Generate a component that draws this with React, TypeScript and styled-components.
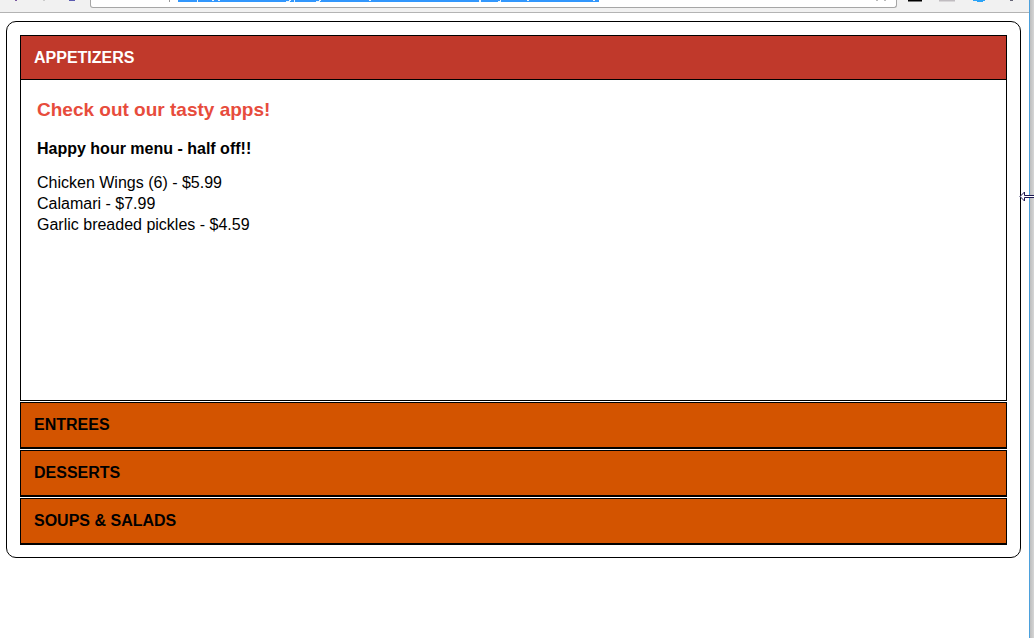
import React, { useState } from "react";
import styled, { createGlobalStyle } from "styled-components";

const GlobalStyle = createGlobalStyle`
  * { box-sizing: border-box; }
  html, body, #root { height: 100%; }
  body {
    margin: 0;
    background: #fff;
    color: #000;
    font: 16px/21px "Liberation Sans", Arial, sans-serif;
  }
`;

const Window = styled.div`
  display: grid;
  grid-template-columns: minmax(0, 1fr) 5px;
  min-height: 100vh;
`;

const Edge = styled.div`
  position: relative;
  border-left: 1px solid #4ba0dc;
  background: linear-gradient(to right, #bdbdbd, #d6d6d6);
`;

const ResizeCursor = styled.svg`
  position: absolute;
  top: 191px;
  right: 0;
  width: 15px;
  height: 11px;
`;

const Toolbar = styled.div`
  display: flex;
  height: 13px;
  overflow: hidden;
  background: #f1f1f1;
  border-bottom: 1px solid #b3b3b3;
`;

const NavIcons = styled.svg`
  flex: none;
  width: 90px;
  height: 12px;
`;

const AddressBar = styled.div`
  flex: 1;
  height: 8px;
  overflow: hidden;
  background: #fff;
  border: 1px solid #a6a6a6;
  border-top: 0;
  border-radius: 0 0 3px 3px;
  display: flex;
  justify-content: space-between;
`;

const Strip = styled.svg<{ $width: number }>`
  flex: none;
  width: ${(p) => p.$width}px;
  height: 7px;
`;

const Extensions = styled.svg`
  flex: none;
  width: 132px;
  height: 12px;
`;

const Menu = styled.main`
  margin: 8px 8px 0 6px;
  padding: 13px 13px 12px;
  border: 1px solid #000;
  border-radius: 10px;
`;

const Section = styled.section`
  & + & { margin-top: 1px; }
`;

const Heading = styled.h2`
  margin: 0;
  font-size: 16px;
  line-height: 21px;
`;

const HeadingButton = styled.button<{ $open: boolean }>`
  display: block;
  width: 100%;
  padding: ${(p) => (p.$open ? "11px 13px" : "11px 13px 12px")};
  border: 1px solid #000;
  border-bottom-width: ${(p) => (p.$open ? 1 : 2)}px;
  background: ${(p) => (p.$open ? "#c0392b" : "#d35400")};
  color: ${(p) => (p.$open ? "#fff" : "#000")};
  font: inherit;
  text-align: left;
  text-transform: uppercase;
  cursor: pointer;
`;

const Panel = styled.div`
  min-height: 321px;
  padding: 16px;
  border: 1px solid #000;
  border-top: 0;
`;

const Lead = styled.h3`
  margin: 0;
  color: #e74c3c;
  font-size: 19px;
  line-height: 28px;
`;

const Offer = styled.h4`
  margin: 14px 0 13px;
  font-size: 16px;
  line-height: 21px;
`;

const Dishes = styled.ul`
  margin: 0;
  padding: 0;
  list-style: none;
`;

interface MenuSection {
  title: string;
  lead?: string;
  offer?: string;
  dishes?: string[];
}

const sections: MenuSection[] = [
  {
    title: "Appetizers",
    lead: "Check out our tasty apps!",
    offer: "Happy hour menu - half off!!",
    dishes: [
      "Chicken Wings (6) - $5.99",
      "Calamari - $7.99",
      "Garlic breaded pickles - $4.59",
    ],
  },
  { title: "Entrees" },
  { title: "Desserts" },
  { title: "Soups & Salads" },
];

function BrowserBar() {
  return (
    <Toolbar aria-hidden="true">
      <NavIcons viewBox="0 0 90 12">
        <path d="M15 0h2v1h-2z" fill="#7a5aa0" />
        <path d="M43 0h2v1h-2z" fill="#ccc" />
        <path d="M69 0h6v1h-6z" fill="#5a5ab0" />
      </NavIcons>
      <AddressBar>
        <Strip $width={520} viewBox="0 0 520 7" shapeRendering="crispEdges">
          <path d="M78 0h1v2h-1z" fill="#999" />
          <path d="M87 0h421v2h-421z" fill="#3297fd" />
          <path
            d="M106 0h1v2h-1zM121 0h2v1h-2zM127 0h2v1h-2zM195 1h4v1h-4zM198 0h2v1h-2zM203 0h1v2h-1zM225 1h4v1h-4zM228 0h2v1h-2zM278 0h2v1h-2zM388 0h2v2h-2zM407 1h3v1h-3zM409 0h1v1h-1zM436 0h2v1h-2zM502 0h2v1h-2z"
            fill="#e5f3ff"
          />
        </Strip>
        <Strip $width={20} viewBox="0 0 20 7">
          <path d="M0 0h2v1H0zM8 0h2v1H8z" fill="#bbb" />
        </Strip>
      </AddressBar>
      <Extensions viewBox="0 0 132 12">
        <path d="M11 0h14v1.5H11z" fill="#000" />
        <path d="M42 0h16v1.5H42z" fill="#c0bcc0" />
        <path d="M76 0h12v1h-2v1h-6V1h-4z" fill="#2ba3f7" />
        <path d="M113 0h3v1h-3z" fill="#667" />
      </Extensions>
    </Toolbar>
  );
}

export default function App() {
  const [open, setOpen] = useState(0);
  return (
    <>
      <GlobalStyle />
      <Window>
        <div>
          <BrowserBar />
          <Menu>
            {sections.map((section, i) => (
              <Section key={section.title}>
                <Heading>
                  <HeadingButton
                    type="button"
                    $open={open === i}
                    aria-expanded={open === i}
                    onClick={() => setOpen(i)}
                  >
                    {section.title}
                  </HeadingButton>
                </Heading>
                {open === i && (
                  <Panel>
                    {section.lead && <Lead>{section.lead}</Lead>}
                    {section.offer && <Offer>{section.offer}</Offer>}
                    {section.dishes && (
                      <Dishes>
                        {section.dishes.map((dish) => (
                          <li key={dish}>{dish}</li>
                        ))}
                      </Dishes>
                    )}
                  </Panel>
                )}
              </Section>
            ))}
          </Menu>
        </div>
        <Edge>
          <ResizeCursor viewBox="0 0 15 11" aria-hidden="true">
            <path
              d="M1 5.5 5.5 1v3.5H16v2H5.5V10z"
              fill="#fff"
              stroke="#1c1650"
            />
          </ResizeCursor>
        </Edge>
      </Window>
    </>
  );
}
